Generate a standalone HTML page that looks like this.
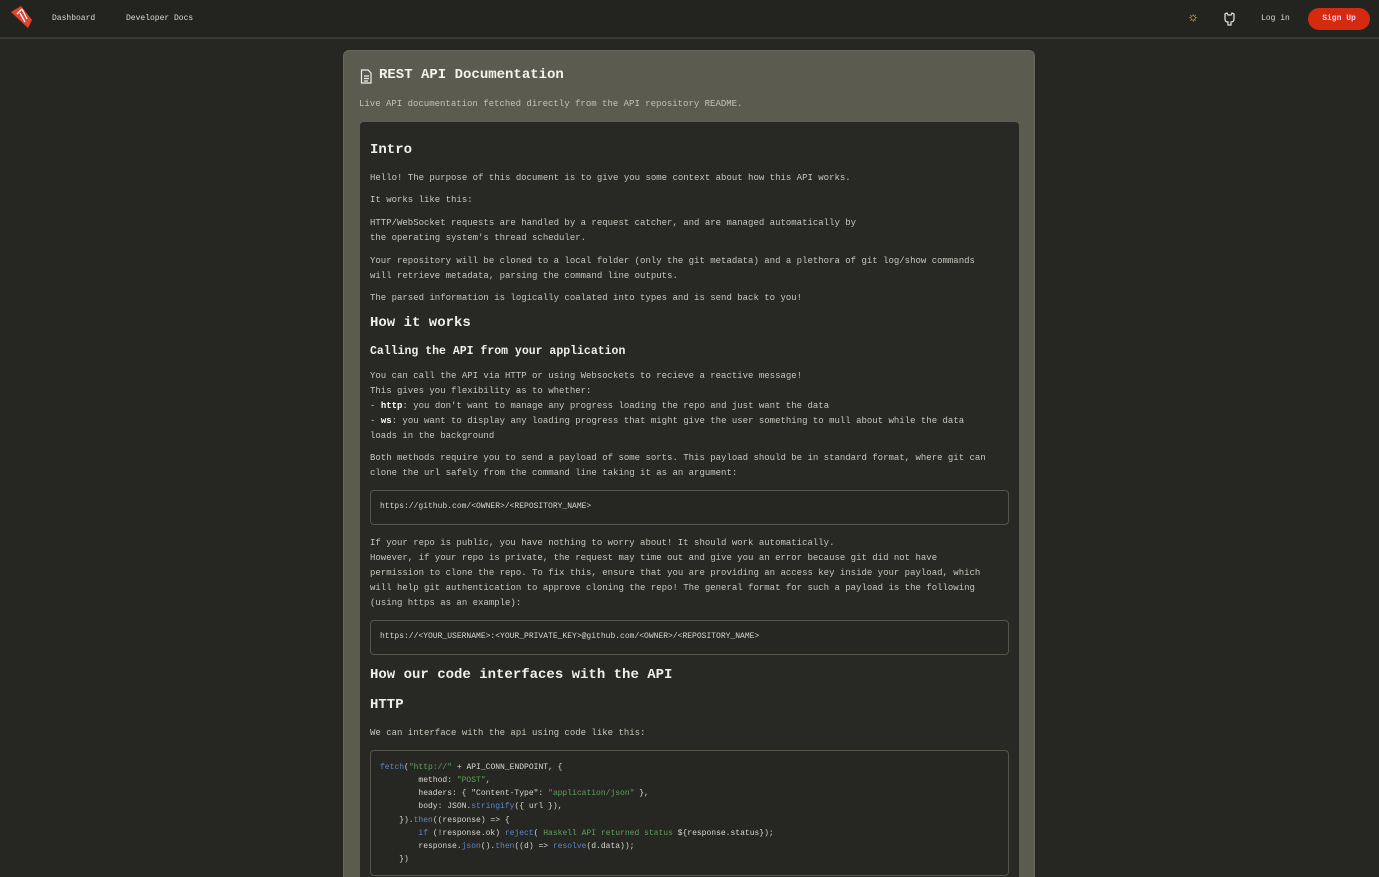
<!DOCTYPE html>
<html><head><meta charset="utf-8"><style>
*{margin:0;padding:0;box-sizing:border-box}
html,body{width:1379px;height:877px;overflow:hidden}
body{background:#262622;font-family:"Liberation Mono",monospace;color:#d8d8d0;position:relative}
.nav{position:absolute;left:0;top:0;width:1379px;height:39px;background:#232320;border-bottom:2px solid #383833}
.a{position:absolute;white-space:pre}
.t{font-size:9px;color:#c8c8be;left:370px}
.card{position:absolute;left:343px;top:50px;width:692px;height:827px;background:#5b5b50;border-radius:6px 6px 0 0;border:1px solid #66665a;border-bottom:none}
.inner{position:absolute;left:360px;top:122px;width:659px;height:755px;background:#282824;border-radius:4px 4px 0 0}
.box{position:absolute;left:370px;width:639px;border:1px solid #55554c;border-radius:4px;background:#262622}
.h{font-weight:bold;color:#f0f0ea;left:370px}
.c{font-size:8px;color:#d8d8d0;left:380px}
.k{color:#5f86c4}.s{color:#5fa05f}
#w{position:absolute;left:0;top:2px;width:1379px;height:875px}
</style></head><body>
<div class="nav"></div>
<svg class="a" style="left:8px;top:4px" width="26" height="26" viewBox="0 0 26 26"><path d="M3 8 L13 2 L24 16 L20 24 Z" fill="#e0452e"/><path d="M9 10 L14 5 M14 5 L19 15 M12 9 L17 18" stroke="#fff" stroke-width="1.3" fill="none"/></svg>
<div class="a" style="left:52px;top:14px;font-size:8px;color:#dcdcd0">Dashboard</div>
<div class="a" style="left:126px;top:14px;font-size:8px;color:#dcdcd0">Developer Docs</div>
<div class="a" style="left:1189px;top:10px;font-size:14px;color:#d8b020">☼</div>
<svg class="a" style="left:1223px;top:12px" width="13" height="14" viewBox="0 0 13 14"><path d="M2 2 L4 1 L5 3 H8 L9 1 L11 2 V7 Q11 10 8 10 V13 H5 V10 Q2 10 2 7 Z" fill="none" stroke="#ddd" stroke-width="1.3"/></svg>
<div class="a" style="left:1261px;top:14px;font-size:8px;color:#dcdcd0">Log in</div>
<div class="a" style="left:1308px;top:8px;width:62px;height:22px;border-radius:11px;background:#d42a10;color:#fce;font-size:8px;font-weight:bold;text-align:center;line-height:22px">Sign Up</div>
<div class="card"></div>
<div class="inner"></div>
<div id="w">
<svg class="a" style="left:360px;top:67px" width="12" height="15" viewBox="0 0 12 15"><path d="M1.5 1 H8 L11 4 V14 H1.5 Z M4 7 H9 M4 9.5 H9 M4 12 H8" fill="none" stroke="#eee" stroke-width="1.2"/></svg>
<div class="a" style="left:379px;top:65px;font-size:14px;font-weight:bold;color:#f4f4ee">REST API Documentation</div>
<div class="a" style="left:359px;top:97px;font-size:9px;color:#c2c2b6">Live API documentation fetched directly from the API repository README.</div>
<div class="a h" style="top:140px;font-size:14px">Intro</div>
<div class="a t" style="top:171px">Hello! The purpose of this document is to give you some context about how this API works.</div>
<div class="a t" style="top:193px">It works like this:</div>
<div class="a t" style="top:216px">HTTP/WebSocket requests are handled by a request catcher, and are managed automatically by</div>
<div class="a t" style="top:231px">the operating system's thread scheduler.</div>
<div class="a t" style="top:254px">Your repository will be cloned to a local folder (only the git metadata) and a plethora of git log/show commands</div>
<div class="a t" style="top:269px">will retrieve metadata, parsing the command line outputs.</div>
<div class="a t" style="top:291px">The parsed information is logically coalated into types and is send back to you!</div>
<div class="a h" style="top:313px;font-size:14px">How it works</div>
<div class="a h" style="top:343px;font-size:11.5px">Calling the API from your application</div>
<div class="a t" style="top:369px">You can call the API via HTTP or using Websockets to recieve a reactive message!</div>
<div class="a t" style="top:384px">This gives you flexibility as to whether:</div>
<div class="a t" style="top:399px">- <b style="color:#fff">http</b>: you don't want to manage any progress loading the repo and just want the data</div>
<div class="a t" style="top:414px">- <b style="color:#fff">ws</b>: you want to display any loading progress that might give the user something to mull about while the data</div>
<div class="a t" style="top:429px">loads in the background</div>
<div class="a t" style="top:451px">Both methods require you to send a payload of some sorts. This payload should be in standard format, where git can</div>
<div class="a t" style="top:466px">clone the url safely from the command line taking it as an argument:</div>
<div class="box" style="top:488px;height:35px"></div>
<div class="a c" style="top:500px">https://github.com/&lt;OWNER&gt;/&lt;REPOSITORY_NAME&gt;</div>
<div class="a t" style="top:536px">If your repo is public, you have nothing to worry about! It should work automatically.</div>
<div class="a t" style="top:551px">However, if your repo is private, the request may time out and give you an error because git did not have</div>
<div class="a t" style="top:566px">permission to clone the repo. To fix this, ensure that you are providing an access key inside your payload, which</div>
<div class="a t" style="top:581px">will help git authentication to approve cloning the repo! The general format for such a payload is the following</div>
<div class="a t" style="top:596px">(using https as an example):</div>
<div class="box" style="top:618px;height:35px"></div>
<div class="a c" style="top:630px">https://&lt;YOUR_USERNAME&gt;:&lt;YOUR_PRIVATE_KEY&gt;@github.com/&lt;OWNER&gt;/&lt;REPOSITORY_NAME&gt;</div>
<div class="a h" style="top:665px;font-size:14px">How our code interfaces with the API</div>
<div class="a h" style="top:695px;font-size:14px">HTTP</div>
<div class="a t" style="top:726px">We can interface with the api using code like this:</div>
<div class="box" style="top:748px;height:126px"></div>
<div class="a c" style="top:761px"><span class="k">fetch</span>(<span class="s">"http://"</span> + API_CONN_ENDPOINT, {</div>
<div class="a c" style="top:774px">        method: <span class="s">"POST"</span>,</div>
<div class="a c" style="top:787px">        headers: { "Content-Type": <span class="s">"application/json"</span> },</div>
<div class="a c" style="top:800px">        body: JSON.<span class="k">stringify</span>({ url }),</div>
<div class="a c" style="top:814px">    }).<span class="k">then</span>((response) =&gt; {</div>
<div class="a c" style="top:827px">        <span class="k">if</span> (!response.ok) <span class="k">reject</span>( <span class="s">Haskell API returned status</span> ${response.status});</div>
<div class="a c" style="top:840px">        response.<span class="k">json</span>().<span class="k">then</span>((d) =&gt; <span class="k">resolve</span>(d.data));</div>
<div class="a c" style="top:853px">    })</div>
</div>
</body></html>
